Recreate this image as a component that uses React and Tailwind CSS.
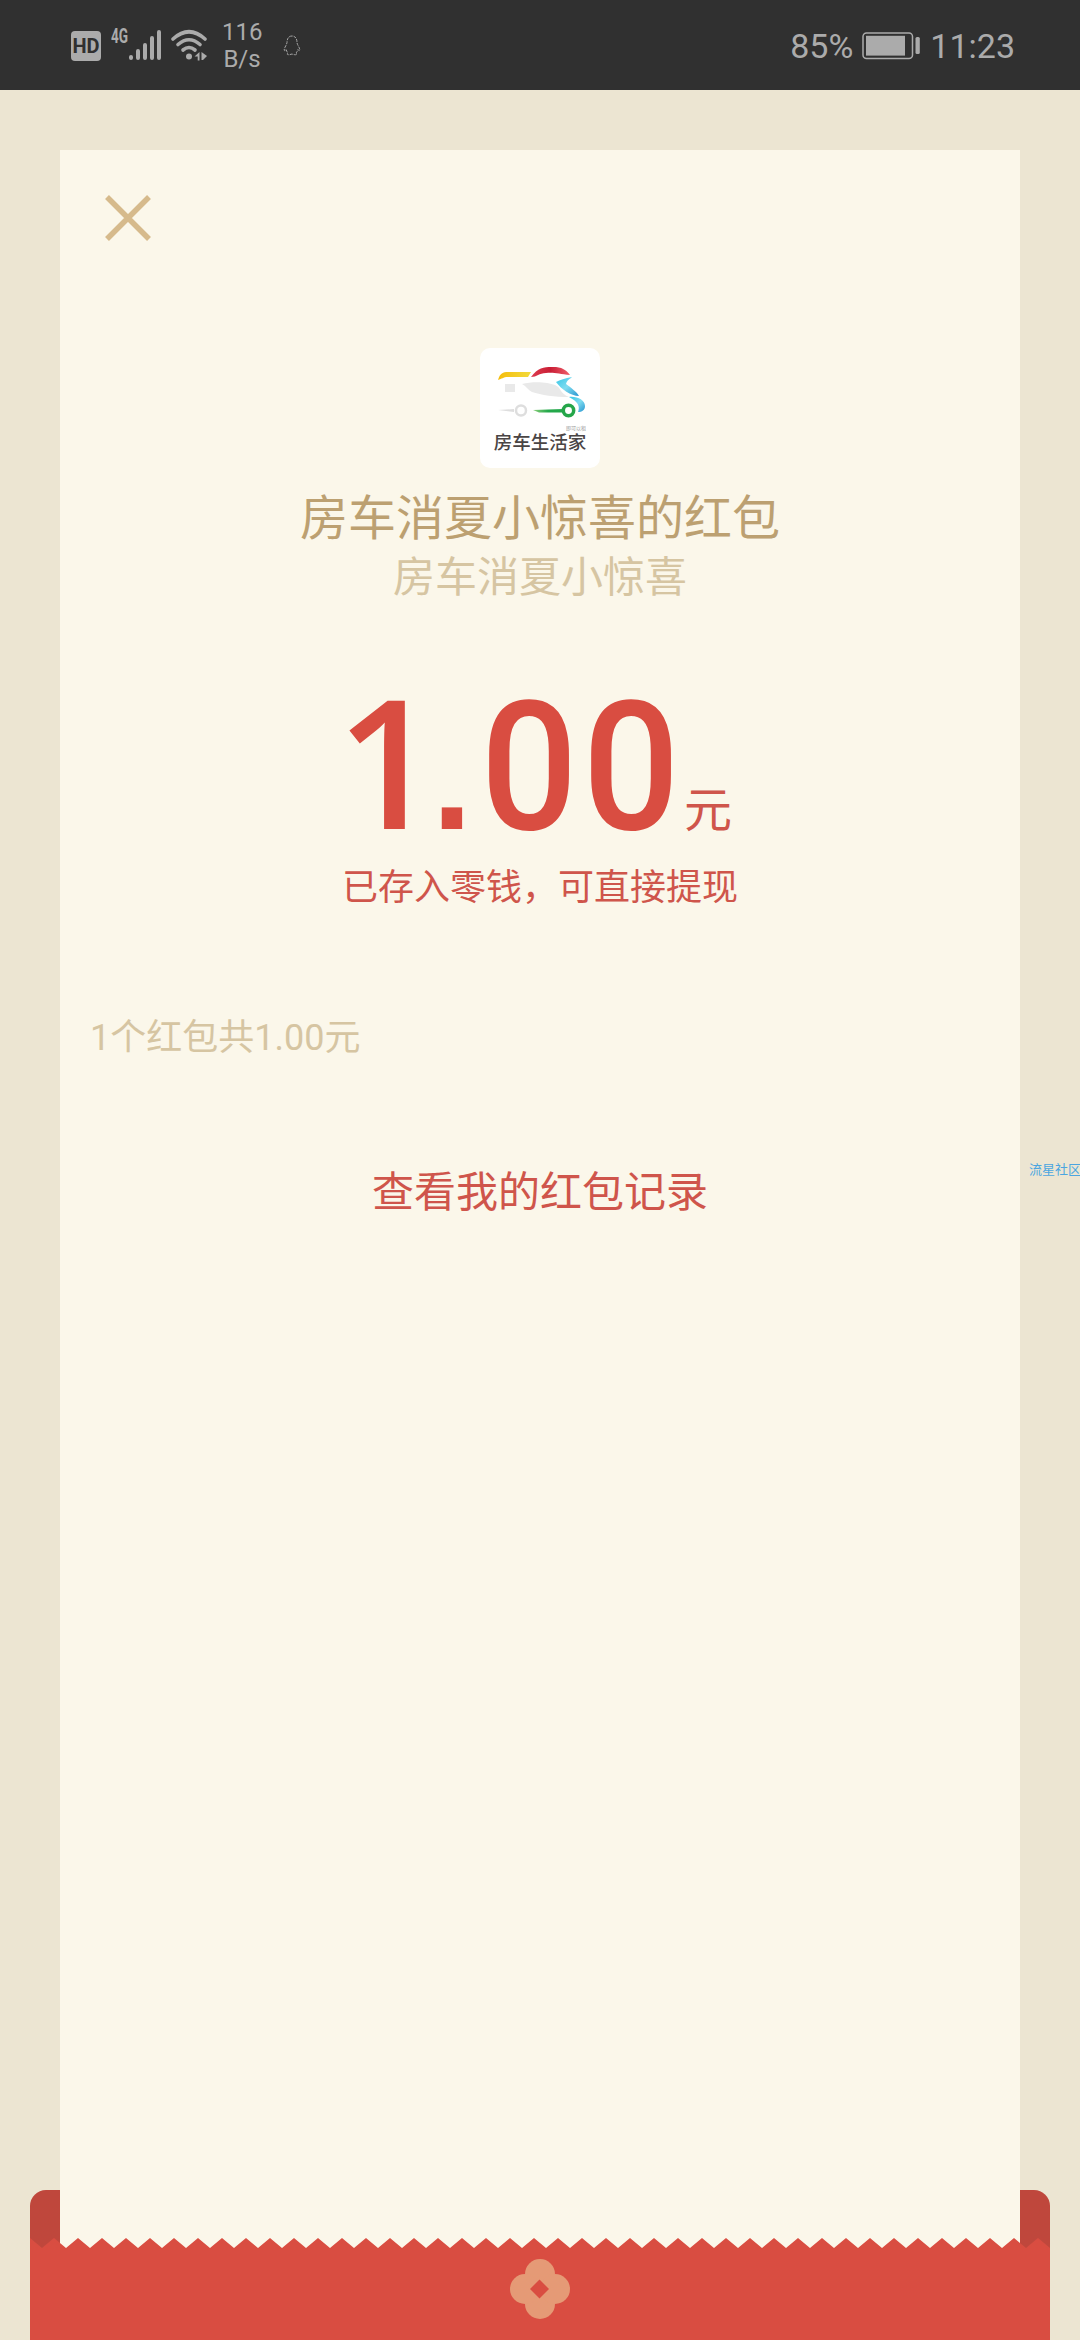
import clsx from 'clsx';

const cjk = 'font-[Roboto,"Noto_Sans_CJK_SC",sans-serif]';

const SignalIcon = () => (
    <svg width="52" height="36" viewBox="0 0 52 36" fill="none" stroke="#ababab" strokeWidth="4" strokeLinecap="round">
        <path d="M20 29v1M27 23v7M34 17v13M41 10v20M48 4v26" />
    </svg>
);

const WifiIcon = () => (
    <svg width="38" height="36" viewBox="0 0 38 36" fill="none" stroke="#ababab" strokeLinecap="round">
        <path d="M3 11Q19 -3.5 35 11" strokeWidth="3.6" />
        <path d="M8 16.5Q19 7 30 16.5" strokeWidth="3.6" />
        <path d="M13 22Q19 17 25 22" strokeWidth="3.6" />
        <circle cx="19" cy="28.5" r="3" fill="#ababab" stroke="none" />
        <path d="M24.500 28.500l5-4.500v8.500h-1.800v-4zM31.500 24l5.500 4-4 4h-1.500z" fill="#ababab" stroke="none" />
    </svg>
);

const QQIcon = () => (
    <svg width="18" height="22" viewBox="0 0 18 22" fill="none" stroke="#a5a5a5" strokeWidth="1" strokeDasharray="3 1">
        <path d="M9 1C5.500 1 4 4 4 7.500C3.800 10 1 13 1.200 15C1.500 16.500 2.500 15 3.200 14.500C3.500 16 4 17 5 18C3 19.500 5 20.500 9 19C13 20.500 15 19.500 13 18C14 17 14.500 16 14.800 14.500C15.500 15 16.500 16.500 16.800 15C17 13 14.200 10 14 7.500C14 4 12.500 1 9 1Z" />
    </svg>
);

const BatteryIcon = () => (
    <svg width="58" height="28" viewBox="0 0 58 28" fill="none">
        <rect x="1" y="1" width="49.500" height="25.500" rx="3.500" stroke="#ababab" strokeWidth="1.500" />
        <rect x="4" y="3.800" width="39" height="19.800" fill="#ababab" />
        <rect x="53.500" y="5" width="4.300" height="17" rx="1.500" fill="#ababab" />
    </svg>
);

const StatusBar = () => (
    <header className={clsx('flex h-[90px] items-start bg-[#303030] text-[#ababab]', cjk)}>
        <div className="mt-[31px] ml-[71px] flex h-[30px] w-[30px] items-center justify-center rounded-[4px] bg-[#ababab] text-[20px] leading-none font-bold text-[#303030]">
            HD
        </div>
        <div className="mt-[27px] ml-[10px] w-[18px] text-[20px] leading-[19px] font-bold">
            <span className="inline-block origin-left scale-x-[0.68]">4G</span>
        </div>
        <div className="mt-[28px] -ml-[18px]"><SignalIcon /></div>
        <div className="mt-[28px] ml-[7px]"><WifiIcon /></div>
        <div className="mt-[19px] ml-[14px] w-[40px] text-center text-[24px] leading-[27px]">
            <div>116</div>
            <div>B/s</div>
        </div>
        <div className="mt-[35px] ml-[21px]"><QQIcon /></div>
        <div className="mt-[26px] mr-[65px] ml-auto flex items-start text-[34px] leading-[40px]">
            <span>85%</span>
            <span className="mt-[6px] mr-[10px] ml-[9px]"><BatteryIcon /></span>
            <span>11:23</span>
        </div>
    </header>
);

const BrandLogo = () => (
    <div className="flex h-[120px] w-[120px] flex-col items-center rounded-[10px] bg-white">
        <svg width="120" height="76" viewBox="0 0 120 76" fill="none">
            <defs>
                <linearGradient id="roof" x1="0" x2="1"><stop stopColor="#f5bd0c" /><stop offset="1" stopColor="#f2da3c" /></linearGradient>
                <linearGradient id="cab" x1="0" x2="1"><stop stopColor="#dd3b4e" /><stop offset=".5" stopColor="#c91e35" /><stop offset="1" stopColor="#f0606c" /></linearGradient>
                <linearGradient id="nose" x1="0" x2="1" y2="1"><stop stopColor="#35c6e6" /><stop offset=".5" stopColor="#7fdcf0" /><stop offset="1" stopColor="#2795d0" /></linearGradient>
                <linearGradient id="road" x1="0" x2="1"><stop stopColor="#8ccf7c" /><stop offset=".5" stopColor="#24a84b" /></linearGradient>
            </defs>
            <path d="M18 32C20 25 23 24 28 24H51L48 29H28C23 29 22 31 18 32Z" fill="url(#roof)" />
            <path d="M51 29C59 18 66 19 76 19C84 20 87 23 90 27C79 26 74 24 66 25C59 25 57 29 51 29Z" fill="url(#cab)" />
            <path d="M25 36h10v8H25zM42 36C53 33 68 34 75 37C82 40 79 45 89 49C75 49 61 47 52 44C48 42 46 38 42 36Z" fill="#e9e9e9" />
            <path d="M92 29C85 30 80 32 76 34C81 41 91 48 99 48C97 44 90 39 86 36C87 32 90 31 92 29Z" fill="url(#nose)" />
            <path d="M89 49C97 48 105 52 105 58C105 62 102 64 98 64C100 59 99 54 89 49Z" fill="url(#nose)" />
            <path d="M18 62L34 61V64Z" fill="#dedede" />
            <circle cx="41" cy="62.500" r="5" stroke="#dedede" strokeWidth="2.500" />
            <path d="M53 62L83 61V64.500H59Z" fill="url(#road)" />
            <circle cx="88.500" cy="62.500" r="5.200" stroke="#25a64a" strokeWidth="3.500" />
        </svg>
        <div className="h-[8px] w-full pr-[14px] text-right text-[5px] leading-[8px] text-[#999]">即可以租</div>
        <div className="text-[18.5px] leading-[22px] font-medium whitespace-nowrap text-[#4a4545]">房车生活家</div>
    </div>
);

const Flower = () => (
    <svg width="60" height="60" viewBox="0 0 60 60" fill="#e59a76">
        <circle cx="30" cy="15" r="15" />
        <circle cx="30" cy="45" r="15" />
        <circle cx="15" cy="30" r="15" />
        <circle cx="45" cy="30" r="15" />
        <path d="M29.500 20.500l9.500 9.500-9.500 9.500-9.500-9.500z" fill="#d94d41" />
    </svg>
);

// saw tooth edge, one tooth each 24px
const TornEdge = () => (
    <svg className="block" width="1020" height="11" viewBox="0 0 1020 11">
        <defs>
            <pattern id="tooth" width="24" height="11" patternUnits="userSpaceOnUse">
                <path d="M0 0L12 10L24 0V11H0Z" fill="#d94d41" />
            </pattern>
        </defs>
        <rect width="1020" height="11" fill="url(#tooth)" />
    </svg>
);

const App = () => {
    return (
        <div className={clsx('relative flex h-[2340px] w-[1080px] flex-col overflow-hidden bg-[#ece5d2]', cjk)}>
            <StatusBar />

            {/* back of the envelope */}
            <div className="absolute top-[2190px] left-[30px] h-[150px] w-[1020px] rounded-t-[16px] bg-[#bf473c]" />

            <main className="relative mx-[60px] mt-[60px] flex h-[2110px] flex-col items-center bg-[#fbf7ea]">
                <button className="mt-[45px] ml-[45px] self-start" aria-label="close">
                    <svg width="46" height="46" viewBox="0 0 46 46" fill="none" stroke="#d6ba8c" strokeWidth="5.500">
                        <path d="M2 2L44 44M44 2L2 44" />
                    </svg>
                </button>

                <div className="mt-[107px]"><BrandLogo /></div>
                <h1 className="mt-[22px] text-[48px] leading-[58px] text-[#bca071]">房车消夏小惊喜的红包</h1>
                <p className="text-[42px] leading-[60px] text-[#d6c5a2]">房车消夏小惊喜</p>

                {/* amount */}
                <div className="mt-[62px] ml-[276px] flex h-[180px] items-baseline self-start text-[180px] leading-[180px] font-medium text-[#d94d41]">
                    <span className="w-[103px] font-['Open_Sans'] font-semibold">1</span>
                    <span className="flex w-[26px] justify-center font-['Liberation_Sans'] text-[144px] font-bold">.</span>
                    <span className="ml-[13px] w-[102px] scale-x-[0.95] text-center">0</span>
                    <span className="w-[102px] scale-x-[0.95] text-center">0</span>
                    <span className="relative -top-[2px] ml-[2px] text-[48px] font-normal text-[#cf554b]">元</span>
                </div>
                <p className="mt-[16px] text-[36px] leading-[44px] text-[#cf554b]">已存入零钱，可直接提现</p>

                <p className="mt-[106px] ml-[30px] self-start text-[36px] leading-[44px] text-[#d6c5a2]">1个红包共1.00元</p>
                <a className="mt-[107px] text-[42px] leading-[52px] text-[#cf554b]">查看我的红包记录</a>
            </main>

            <div className="absolute top-[1162px] left-[1029px] text-[13px] leading-[16px] whitespace-nowrap text-[#4ba5e0]">流星社区</div>

            {/* front of the envelope lies over the paper */}
            <div className="absolute top-[2238px] left-[30px] flex w-[1020px] flex-col">
                <TornEdge />
                <div className="flex h-[92px] justify-center bg-[#d94d41] pt-[10px]">
                    <Flower />
                </div>
            </div>
        </div>
    );
};

export default App;
